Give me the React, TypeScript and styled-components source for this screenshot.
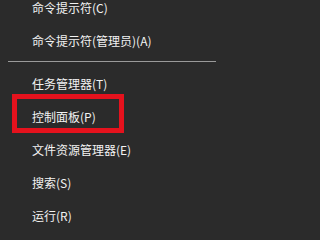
import * as React from 'react';
import styled, { createGlobalStyle } from 'styled-components';

type Entry = { label: string, marked?: boolean } | 'separator';

const entries: Entry[] = [
    { label: '命令提示符(C)' },
    { label: '命令提示符(管理员)(A)' },
    'separator',
    { label: '任务管理器(T)' },
    { label: '控制面板(P)', marked: true },
    { label: '文件资源管理器(E)' },
    { label: '搜索(S)' },
    { label: '运行(R)' },
];

const App: React.FC = () => {
    return (
        <>
            <GlobalStyle />
            <Menu>
                {
                    entries.map((item, index) => {
                        if (item === 'separator') {
                            return <Separator key={index} />
                        }
                        return (
                            <MenuItem key={item.label} marked={!!item.marked}>
                                {item.label}
                            </MenuItem>
                        )
                    })
                }
            </Menu>
        </>
    )
}

export default App;

const GlobalStyle = createGlobalStyle`
    html, body {
        margin: 0;
        padding: 0;
        background: #2b2b2b;
        overflow: hidden;
    }
`

const Menu = styled.div`
    width: 223px;
    height: 223px;
    overflow: hidden;
    background: #2b2b2b;
    display: flex;
    flex-direction: column;
    padding-top: 0;
    box-sizing: border-box;

    & > :first-child {
        margin-top: -9px;
    }
`

const MenuItem = styled.div<{ marked: boolean }>`
    position: relative;
    flex: none;
    height: 33px;
    line-height: 33px;
    padding-left: 32px;
    font-family: "Noto Sans CJK SC", "Noto Sans", sans-serif;
    font-size: 12px;
    color: #f2f2f2;
    white-space: nowrap;

    &::after {
        content: '';
        display: ${props => props.marked ? 'block' : 'none'};
        position: absolute;
        left: 12px;
        top: -6px;
        width: 112px;
        height: 39px;
        box-sizing: border-box;
        border: 5px solid #e5121d;
    }
`

const Separator = styled.div`
    flex: none;
    height: 1px;
    margin: 4px 7px 5px 8px;
    background: #9a9a9a;
`
